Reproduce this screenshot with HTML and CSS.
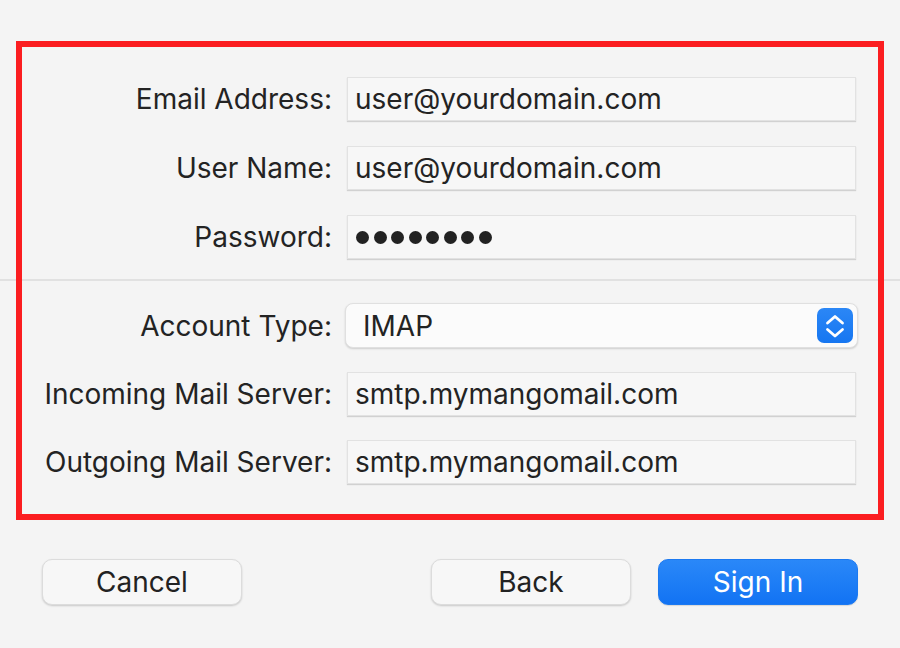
FILE: index.html
```html
<!DOCTYPE html>
<html lang="en">
<head>
<meta charset="utf-8">
<title>Mail Account Setup</title>
<link rel="stylesheet" href="styles.css">
</head>
<body>
<div class="page">
  <div class="form">
    <div class="section">
      <div class="row">
        <label class="label">Email Address:</label>
        <div class="field">user@yourdomain.com</div>
      </div>
      <div class="row">
        <label class="label">User Name:</label>
        <div class="field">user@yourdomain.com</div>
      </div>
      <div class="row">
        <label class="label">Password:</label>
        <div class="field"><span class="dots" aria-label="password"><i></i><i></i><i></i><i></i><i></i><i></i><i></i><i></i></span></div>
      </div>
    </div>
    <div class="divider"></div>
    <div class="section section-b">
      <div class="row">
        <label class="label">Account Type:</label>
        <div class="popup">
          <span>IMAP</span>
          <span class="stepper">
            <svg width="36" height="35" viewBox="0 0 36 35"><path d="M10.5 15 L18 8.5 L25.5 15" fill="none" stroke="#fff" stroke-width="2.8" stroke-linecap="round" stroke-linejoin="round"/><path d="M10.5 21.5 L18 28 L25.5 21.5" fill="none" stroke="#fff" stroke-width="2.8" stroke-linecap="round" stroke-linejoin="round"/></svg>
          </span>
        </div>
      </div>
      <div class="row">
        <label class="label">Incoming Mail Server:</label>
        <div class="field">smtp.mymangomail.com</div>
      </div>
      <div class="row">
        <label class="label">Outgoing Mail Server:</label>
        <div class="field">smtp.mymangomail.com</div>
      </div>
    </div>
  </div>
  <div class="buttons">
    <button class="btn">Cancel</button>
    <div class="btn-group">
      <button class="btn">Back</button>
      <button class="btn btn-primary">Sign In</button>
    </div>
  </div>
  <div class="highlight"></div>
</div>
</body>
</html>
```
FILE: styles.css
```css
* { box-sizing: border-box; }
html, body { margin: 0; padding: 0; }
body {
  background: #f4f4f4;
  font-family: "Inter", "Helvetica Neue", "Liberation Sans", Arial, sans-serif;
  color: #232323;
  width: 900px;
  height: 648px;
  overflow: hidden;
}
.page {
  position: relative;
  width: 900px;
  height: 648px;
  padding-top: 77px;
}
.form { display: flex; flex-direction: column; }
.section { display: flex; flex-direction: column; gap: 25px; }
.section-b { gap: 24px; }
.row {
  display: grid;
  grid-template-columns: 332px 509px;
  column-gap: 15px;
  align-items: center;
}
.label {
  text-align: right;
  font-size: 28px;
  white-space: nowrap;
}
.field {
  height: 44px;
  background: #f7f7f7;
  border: 1px solid #e2e2e2;
  box-shadow: 0 1px 1px rgba(0,0,0,0.14);
  padding: 0 7px;
  display: flex;
  align-items: center;
  font-size: 28px;
  white-space: nowrap;
}
.dots { display: flex; gap: 4.5px; padding-left: 1px; }
.dots i {
  display: block;
  width: 13px;
  height: 13px;
  border-radius: 50%;
  background: #222;
}
.divider {
  height: 2px;
  background: #e1e1e1;
  margin: 20px 0 22px;
}
.popup {
  margin: 0 -2px;
  height: 45px;
  background: #fbfbfb;
  border: 1px solid #e0e0e0;
  border-radius: 8px;
  box-shadow: 0 1px 2px rgba(0,0,0,0.16);
  display: flex;
  align-items: center;
  justify-content: space-between;
  padding: 0 4px 0 17px;
  font-size: 28px;
}
.stepper {
  width: 36px;
  height: 35px;
  border-radius: 7px;
  background: linear-gradient(#2b87f6, #1676f1);
  display: flex;
}
.buttons {
  margin-top: 75px;
  padding: 0 42px;
  display: flex;
  justify-content: space-between;
}
.btn-group { display: flex; gap: 27px; }
.btn {
  width: 200px;
  height: 46px;
  border-radius: 10px;
  background: #f7f7f7;
  border: 1px solid #dcdcdc;
  box-shadow: 0 1px 2px rgba(0,0,0,0.18);
  font-family: inherit;
  font-size: 28px;
  color: #222;
  padding: 0;
}
.btn-primary {
  background: linear-gradient(#2a88f8, #1273f3);
  border-color: #1b79f1;
  color: #fff;
  box-shadow: 0 1px 1px rgba(0,0,0,0.12);
}
.highlight {
  position: absolute;
  left: 16px;
  top: 41px;
  width: 868px;
  height: 479px;
  border: 6px solid #fb1d20;
  pointer-events: none;
}
```
